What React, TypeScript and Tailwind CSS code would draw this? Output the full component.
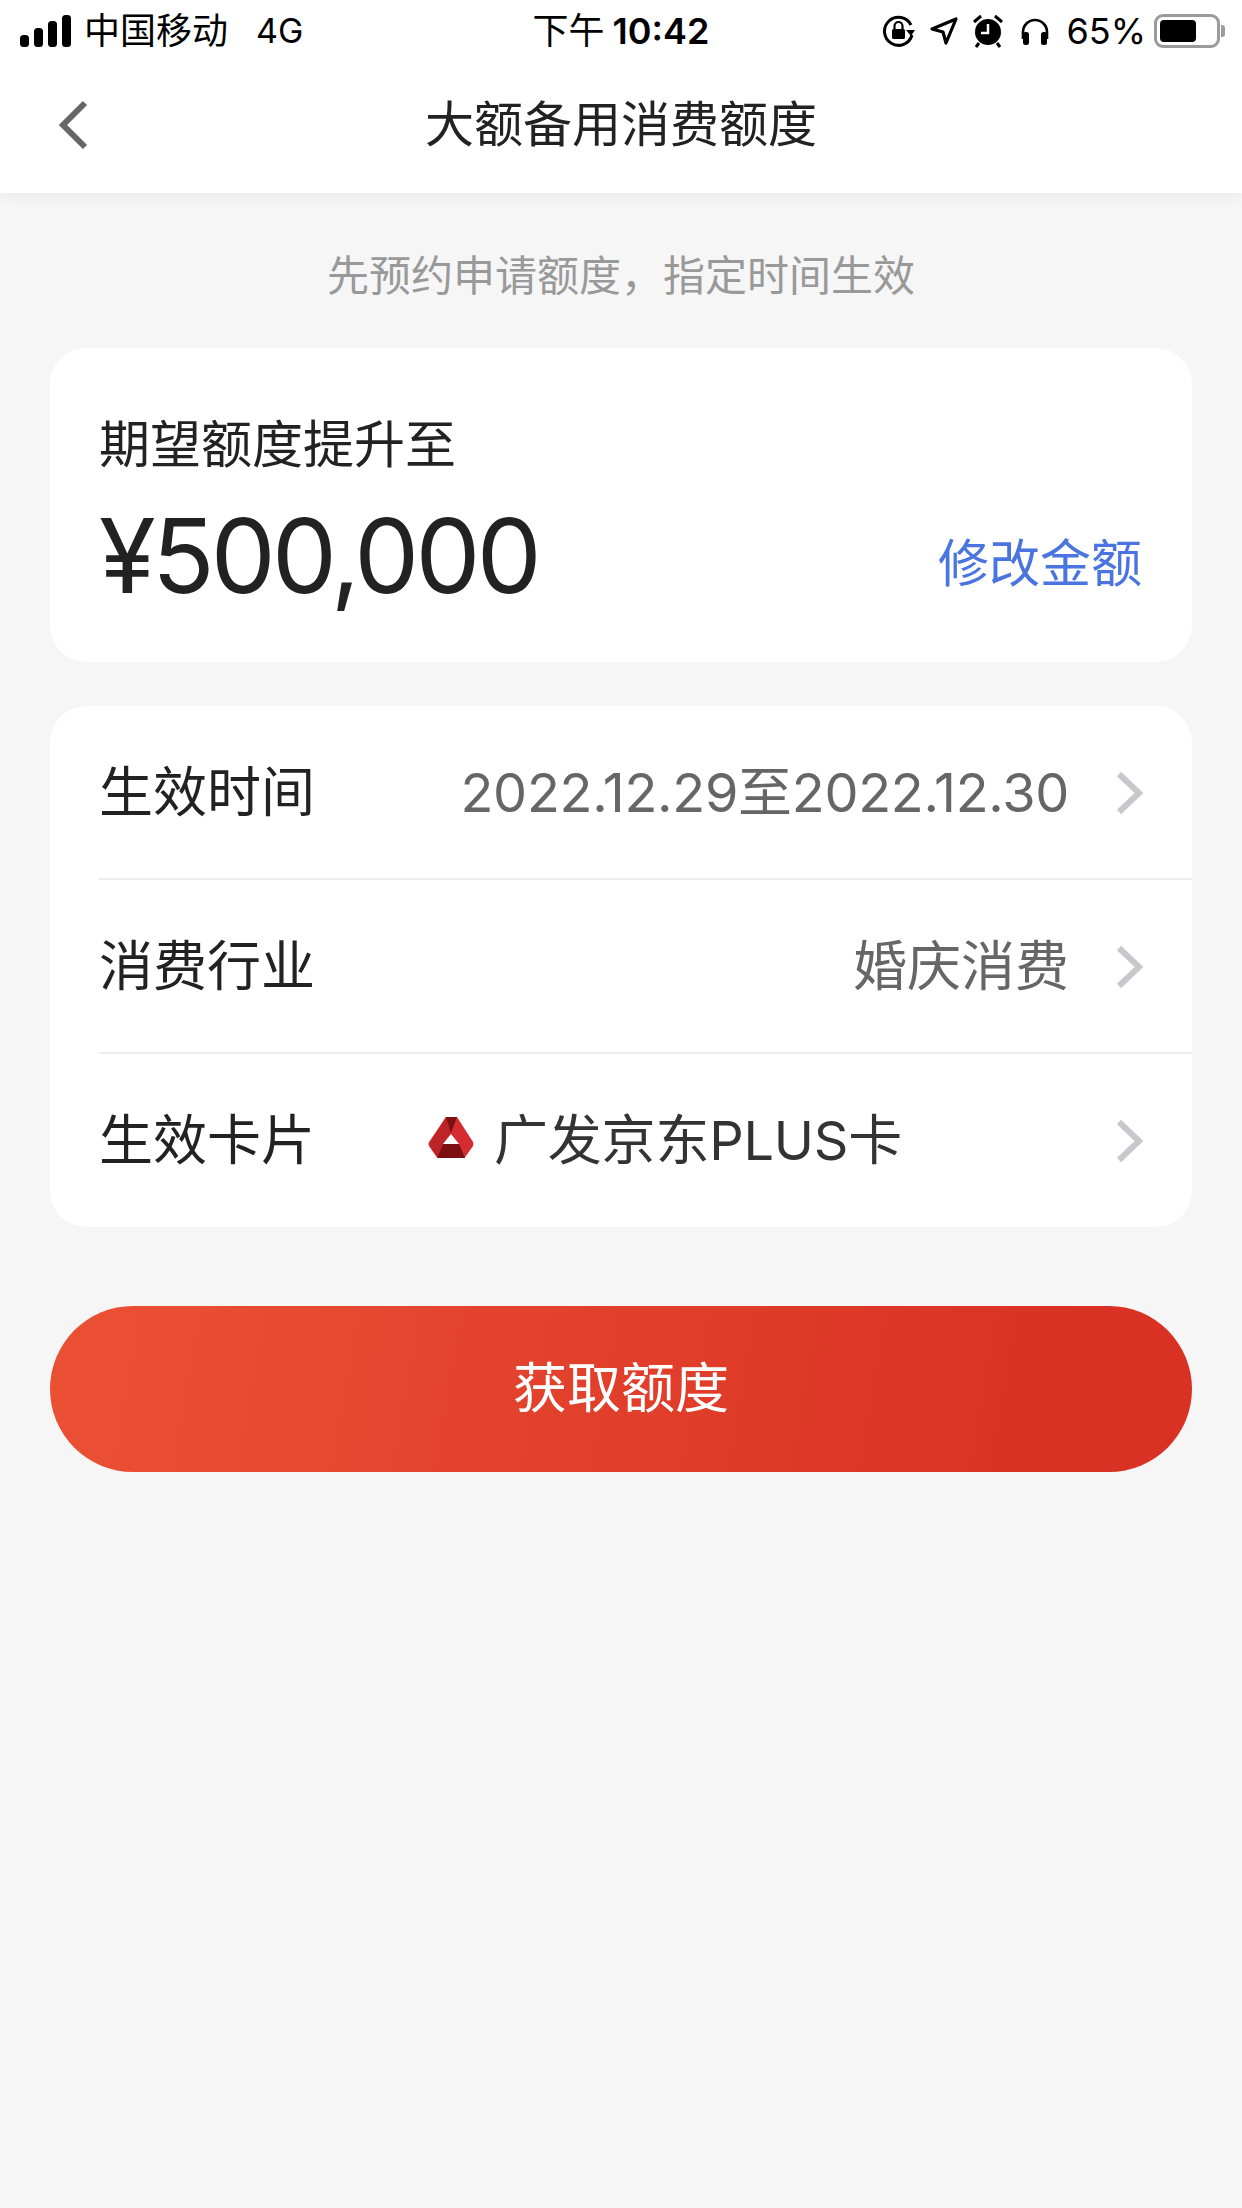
const F = 'Inter,"Noto Sans CJK SC",sans-serif';

function Chevron() {
  return (
    <svg width="28" height="44" viewBox="0 0 28 44" className="shrink-0">
      <path d="M3 3 L23 22 L3 41" fill="none" stroke="#c8c8cc" strokeWidth="6" />
    </svg>
  );
}

function Row({ label, value, border, last }: { label: string; value: React.ReactNode; border?: boolean; last?: boolean }) {
  return (
    <div className={`${last ? 'h-[173px]' : 'h-[174px]'} pl-[49px] flex`}>
      <div className={`flex-1 flex items-center pr-[48px] ${border ? 'border-b-2 border-[#eeeeee] pt-[2px]' : ''}`}>
        <span className="text-[54px] text-[#222222] leading-none shrink-0">{label}</span>
        {value}
        <Chevron />
      </div>
    </div>
  );
}

function StatusBar() {
  return (
    <div className="h-[62px] bg-white grid grid-cols-[1fr_auto_1fr] items-center pl-[20px] pr-[17px] text-black">
      <div className="flex items-center">
        <svg width="52" height="34" viewBox="0 0 52 34">
          <rect x="0" y="21" width="9" height="12" rx="3.5" />
          <rect x="14" y="14" width="9" height="19" rx="3.5" />
          <rect x="28" y="7" width="9" height="26" rx="3.5" />
          <rect x="42" y="1" width="9" height="32" rx="3.5" />
        </svg>
        <span className="ml-[12px] text-[36px] leading-none">中国移动</span>
        <span className="ml-[28px] text-[34px] leading-none">4G</span>
      </div>
      <div className="flex items-center leading-none pr-[3px]">
        <span className="text-[36px]">下午</span>
        <span className="ml-[8px] text-[36px] font-semibold">10:42</span>
      </div>
      <div className="flex items-center justify-end">
        <svg width="34" height="34" viewBox="0 0 34 34" className="mr-[13px]">
          <path d="M29 11 A14 14 0 1 0 30 21" fill="none" stroke="#000" strokeWidth="3" />
          <path d="M24 16 L33 16 L29 22 Z" />
          <rect x="10" y="15" width="13" height="10" rx="1.5" />
          <path d="M12.5 15 V12 a4 4 0 0 1 8 0 V15" fill="none" stroke="#000" strokeWidth="2.2" />
        </svg>
        <svg width="30" height="30" viewBox="0 0 30 30" className="mr-[14px]">
          <path d="M3 13 L27 3 L17 27 L14 16 Z" fill="none" stroke="#000" strokeWidth="3.2" strokeLinejoin="round" />
        </svg>
        <svg width="30" height="34" viewBox="0 0 30 34" className="mr-[17px]">
          <circle cx="15" cy="18" r="13" />
          <path d="M15 10 V19 H8" fill="none" stroke="#fff" strokeWidth="2.5" />
          <path d="M1 8 L8 2 M29 8 L22 2 M6 29 L3 33 M24 29 L27 33" stroke="#000" strokeWidth="3" />
        </svg>
        <svg width="30" height="28" viewBox="0 0 30 28" className="mr-[16px]">
          <path d="M3 22 V15 a12 12 0 0 1 24 0 V22" fill="none" stroke="#000" strokeWidth="2.6" />
          <rect x="3" y="15" width="6" height="13" rx="2.5" />
          <rect x="21" y="15" width="6" height="13" rx="2.5" />
        </svg>
        <span className="text-[36px] leading-none">65%</span>
        <div className="ml-[8px] w-[66px] h-[34px] border-[3px] border-[#9b9b9b] rounded-[9px] p-[3px]">
          <div className="w-[36px] h-full bg-black rounded-[4px]" />
        </div>
        <div className="ml-[1px] w-[4px] h-[12px] bg-[#9b9b9b] rounded-r-[3px]" />
      </div>
    </div>
  );
}

export default function App() {
  return (
    <div className="w-[1242px] h-[2208px] bg-[#f6f6f6] overflow-hidden" style={{ fontFamily: F }}>
      <div className="bg-white shadow-[0_4px_14px_rgba(0,0,0,0.05)] relative">
        <StatusBar />
        <div className="h-[131px] relative flex items-center justify-center pb-[6px]">
          <svg width="30" height="50" viewBox="0 0 30 50" className="absolute left-[58px] top-[38px]">
            <path d="M27 3 L5 25 L27 47" fill="none" stroke="#666666" strokeWidth="6" />
          </svg>
          <span className="text-[49px] text-[#222222] leading-none">大额备用消费额度</span>
        </div>
      </div>

      <div className="text-center text-[42px] leading-none text-[#999999] mt-[62px]">先预约申请额度，指定时间生效</div>

      <div className="mx-[50px] mt-[51px] bg-white rounded-[36px] h-[314px] pl-[49px] pr-[50px] pt-[67px]">
        <div className="text-[51px] leading-none text-[#222222] mt-[4px]">期望额度提升至</div>
        <div className="flex items-center justify-between mt-[34px]">
          <span className="text-[103px] leading-none text-[#222222] tracking-[-3.7px]">¥500,000</span>
          <span className="text-[51px] leading-none text-[#4a74e0] mt-[16px]">修改金额</span>
        </div>
      </div>

      <div className="mx-[50px] mt-[44px] bg-white rounded-[36px] overflow-hidden">
        <Row
          border
          label="生效时间"
          value={<span className="flex-1 text-right text-[54px] text-[#666666] leading-none pr-[47px] tracking-[-0.3px]">2022.12.29至2022.12.30</span>}
        />
        <Row
          border
          label="消费行业"
          value={<span className="flex-1 text-right text-[54px] text-[#666666] leading-none pr-[47px]">婚庆消费</span>}
        />
        <Row
          last
          label="生效卡片"
          value={
            <span className="flex-1 flex items-center pl-[113px]">
              <svg width="46" height="41" viewBox="0 0 46 41" className="mb-[6px]">
                <path d="M18 0 H29 L45 25 Q46 27 45 29 L38 39 Q37 41 35 41 H11 Q9 41 8 39 L1 29 Q0 27 1 25 Z" fill="#d42c30" />
                <path d="M18 0 L23 16 L14 28 L9 40 L1 28 Z" fill="#bd2428" />
                <path d="M18 0 H29 L23 16 Z" fill="#7c0f12" />
                <path d="M23 17 L31 27 H15 Z" fill="#ffffff" />
                <path d="M15 27 H31 L37 41 H9 Z" fill="#7c0f12" />
              </svg>
              <span className="ml-[20px] text-[54px] text-[#333333] leading-none tracking-[-0.2px]">广发京东PLUS卡</span>
            </span>
          }
        />
      </div>

      <div className="mx-[50px] mt-[79px] h-[166px] rounded-full bg-[linear-gradient(100deg,#ea4f34_5%,#d93123_90%)] flex items-center justify-center">
        <span className="text-white text-[54px] leading-none">获取额度</span>
      </div>
    </div>
  );
}
